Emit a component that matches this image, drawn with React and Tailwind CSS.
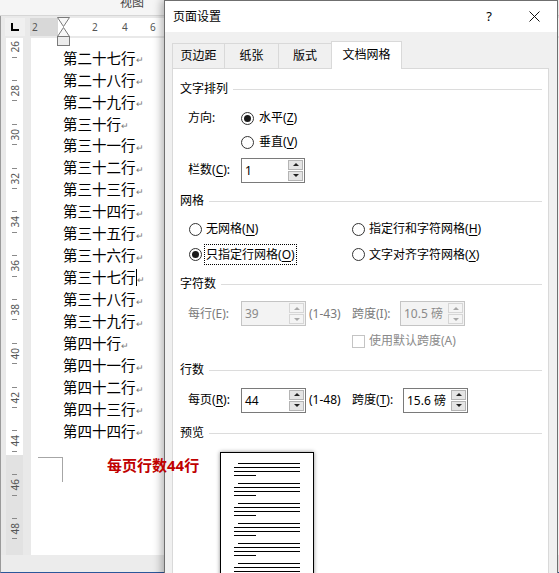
import React from 'react';

const docLines = [
  '第二十七行', '第二十八行', '第二十九行', '第三十行', '第三十一行', '第三十二行',
  '第三十三行', '第三十四行', '第三十五行', '第三十六行', '第三十七行', '第三十八行',
  '第三十九行', '第四十行', '第四十一行', '第四十二行', '第四十三行', '第四十四行',
];

const rulerMarks = [26, 28, 30, 32, 34, 36, 38, 40, 42, 44, 46, 48];

const previewGroups = [0, 1, 2, 3, 4, 5, 6];

function Radio({ checked }) {
  return (
    <span className="flex h-[13px] w-[13px] shrink-0 items-center justify-center rounded-full border border-[#333333] bg-white">
      {checked && <span className="h-[7px] w-[7px] rounded-full bg-[#1a1a1a]" />}
    </span>
  );
}

function Key({ k }) {
  return (
    <>
      (<u className="underline-offset-2">{k}</u>)
    </>
  );
}

function Spin({ value, width, disabled }) {
  const box = disabled
    ? 'border-[#c4c4c4] bg-[#f3f3f3] text-[#8a8a8a]'
    : 'border-[#7a7a7a] bg-white text-black';
  const btn = disabled ? 'border-[#d6d6d6] bg-[#f4f4f4]' : 'border-[#b4b4b4] bg-[#e5e5e5]';
  const arrowUp = disabled ? 'border-b-[#a8a8a8]' : 'border-b-[#222222]';
  const arrowDown = disabled ? 'border-t-[#a8a8a8]' : 'border-t-[#222222]';
  return (
    <div className={`flex h-[25px] border ${width} ${box}`}>
      <span className="flex-1 pl-[3px] leading-[23px]">{value}</span>
      <div className="my-[1px] mr-[1px] flex w-[15px] flex-col gap-[1px]">
        <span className={`flex flex-1 items-center justify-center border ${btn}`}>
          <span className={`h-0 w-0 border-x-[3px] border-b-[3px] border-x-transparent ${arrowUp}`} />
        </span>
        <span className={`flex flex-1 items-center justify-center border ${btn}`}>
          <span className={`h-0 w-0 border-x-[3px] border-t-[3px] border-x-transparent ${arrowDown}`} />
        </span>
      </div>
    </div>
  );
}

function Header({ title, mt }) {
  return (
    <div className={`flex h-[20px] items-center pl-[7px] ${mt}`}>
      <span>{title}</span>
      <span className="ml-[5px] mr-[6px] h-px flex-1 bg-[#dcdcdc]" />
    </div>
  );
}

function PageDialog() {
  return (
    <div className="absolute left-[164px] top-0 h-[600px] w-[394px] border border-[#6f6f6f] bg-[#f0f0f0] text-[12px] text-black shadow-[-3px_0_8px_rgba(0,0,0,0.28)] font-['Noto_Sans','Noto_Sans_CJK_SC',sans-serif]">
      {/* title bar */}
      <div className="flex h-[31px] items-center bg-white pl-[8px]">
        <span>页面设置</span>
        <span className="ml-auto text-[13px]">?</span>
        <svg className="ml-[37px] mr-[17px]" width="11" height="11" viewBox="0 0 11 11">
          <path d="M0.5 0.5L10.5 10.5M10.5 0.5L0.5 10.5" stroke="#111" strokeWidth="1" fill="none" />
        </svg>
      </div>

      {/* tabs */}
      <div className="mt-[9px] flex h-[27px] items-end pl-[7px]">
        <div className="flex h-[25px] w-[52px] items-center justify-center border-l border-t border-[#d9d9d9]">页边距</div>
        <div className="flex h-[25px] w-[54px] items-center justify-center border-l border-t border-[#d9d9d9]">纸张</div>
        <div className="flex h-[25px] w-[53px] items-center justify-center border-l border-t border-[#d9d9d9]">版式</div>
        <div className="relative z-10 -mb-px flex h-[28px] w-[71px] items-start justify-center border-x border-t border-[#d9d9d9] bg-white pt-[4px]">文档网格</div>
      </div>

      {/* panel */}
      <div className="ml-[7px] h-[520px] w-[377px] border border-[#d9d9d9] bg-white">
        <Header title="文字排列" mt="mt-[10px]" />

        <div className="mt-[7px] flex h-[24px] items-center pl-[15px]">
          <span className="w-[53px]">方向:</span>
          <Radio checked />
          <span className="ml-[5px]">水平<Key k="Z" /></span>
        </div>
        <div className="flex h-[24px] items-center pl-[68px]">
          <Radio />
          <span className="ml-[5px]">垂直<Key k="V" /></span>
        </div>
        <div className="mt-[4px] flex h-[24px] items-center pl-[15px]">
          <span className="w-[53px]">栏数<Key k="C" />:</span>
          <Spin value="1" width="w-[64px]" />
        </div>

        <Header title="网格" mt="mt-[9px]" />

        <div className="mt-[8px] flex h-[20px] items-center pl-[16px]">
          <div className="flex w-[163px] items-center gap-[4px]">
            <Radio />
            <span>无网格<Key k="N" /></span>
          </div>
          <div className="flex items-center gap-[4px]">
            <Radio />
            <span>指定行和字符网格<Key k="H" /></span>
          </div>
        </div>
        <div className="mt-[5px] flex h-[21px] items-center pl-[16px]">
          <div className="flex w-[163px] items-center">
            <Radio checked />
            <span className="ml-[2px] border border-dotted border-black px-[1px] leading-[19px]">只指定行网格<Key k="O" /></span>
          </div>
          <div className="flex items-center gap-[4px]">
            <Radio />
            <span>文字对齐字符网格<Key k="X" /></span>
          </div>
        </div>

        <Header title="字符数" mt="mt-[9px]" />

        <div className="mt-[7px] flex h-[25px] items-center pl-[15px] text-[#7a7a7a]">
          <span className="w-[53px]">每行(E):</span>
          <Spin value="39" width="w-[65px]" disabled />
          <span className="ml-[3px] w-[43px]">(1-43)</span>
          <span className="w-[48px]">跨度(I):</span>
          <Spin value="10.5 磅" width="w-[65px]" disabled />
        </div>
        <div className="mt-[5px] flex h-[20px] items-center pl-[179px] text-[#8a8a8a]">
          <span className="h-[13px] w-[13px] border border-[#c4c4c4] bg-white" />
          <span className="ml-[4px]">使用默认跨度(A)</span>
        </div>

        <Header title="行数" mt="mt-[9px]" />

        <div className="mt-[7px] flex h-[26px] items-center pl-[15px]">
          <span className="w-[53px]">每页<Key k="R" />:</span>
          <Spin value="44" width="w-[65px]" />
          <span className="ml-[3px] w-[43px]">(1-48)</span>
          <span className="w-[51px]">跨度<Key k="T" />:</span>
          <Spin value="15.6 磅" width="w-[65px]" />
        </div>

        <Header title="预览" mt="mt-[10px]" />

        <div className="mt-[9px] pl-[47px]">
          <div className="h-[160px] w-[94px] border border-black bg-white pl-[13px] pt-[10px] shadow-[0_0_4px_rgba(0,0,0,0.45)]">
            <div className="flex flex-col gap-[7px]">
              {previewGroups.map((g) => (
                <div key={g} className="flex flex-col gap-[3px]">
                  <span className="ml-[4px] h-px w-[62px] bg-black" />
                  <span className="h-px w-[66px] bg-black" />
                  <span className="h-px w-[66px] bg-black" />
                  <span className="h-px w-[22px] bg-black" />
                </div>
              ))}
            </div>
          </div>
        </div>
      </div>
    </div>
  );
}

function WordWindow() {
  return (
    <div className="flex h-full flex-col font-['Noto_Sans','Noto_Sans_CJK_SC',sans-serif]">
      {/* ribbon bottom */}
      <div className="h-[16px] overflow-hidden border-b border-[#d6d6d6] bg-[#f5f5f5] pl-[120px]">
        <div className="-mt-[3px] text-[12px] leading-[12px] text-[#444444]">视图</div>
      </div>

      {/* horizontal ruler row */}
      <div className="relative flex h-[22px] items-center border-l border-[#9a9a9a] bg-[#e9e9e9]">
        <div className="ml-[4px] flex h-[18px] w-[20px] items-center justify-center bg-[#f0f0f0]">
          <span className="h-[8px] w-[8px] border-b-2 border-l-2 border-black" />
        </div>
        <div className="ml-[5px] flex h-[18px] flex-1 text-[10px] leading-[18px] text-[#555555]">
          <div className="w-[28px] bg-[#d8d8d8] pl-[2px]">2</div>
          <div className="flex flex-1 bg-white">
            <span className="ml-[34px] w-[6px]">2</span>
            <span className="ml-[24px] w-[6px]">4</span>
            <span className="ml-[22px] w-[6px]">6</span>
          </div>
        </div>
        <svg className="absolute left-[56px] top-[1px] z-10" width="13" height="29" viewBox="0 0 13 29">
          <path d="M0.5 0.5H12.5L6.5 9.5Z" fill="#f7f7f7" stroke="#7a7a7a" />
          <path d="M6.5 10.5L0.5 19.5H12.5Z" fill="#f7f7f7" stroke="#7a7a7a" />
          <rect x="0.5" y="19.5" width="12" height="9" fill="#ececec" stroke="#7a7a7a" />
        </svg>
      </div>

      {/* document area */}
      <div className="flex h-[517px]">
        <div className="w-[31px] border-l border-[#9a9a9a] bg-[#e9e9e9] pl-[5px]">
          <div className="h-full w-[17px] overflow-hidden bg-[linear-gradient(to_bottom,#ffffff_417px,#e2e2e2_417px)]">
            <div className="-mt-[13px] flex flex-col">
              {rulerMarks.map((n) => (
                <div key={n} className="flex h-[43.8px] flex-col items-center justify-center gap-[4px]">
                  <span className="h-px w-[5px] bg-[#8a8a8a]" />
                  <span className="rotate-180 text-[10px] leading-[10px] text-[#555555] [writing-mode:vertical-rl]">{n}</span>
                  <span className="h-px w-[5px] bg-[#8a8a8a]" />
                </div>
              ))}
            </div>
          </div>
        </div>

        <div className="flex-1 bg-white pt-[9px] font-['Noto_Sans_CJK_SC',sans-serif]">
          {docLines.map((line, i) => (
            <div key={line} className="flex h-[21.95px] items-center pl-[32px] text-[14.5px] leading-none text-black">
              <span>{line}</span>
              {i === 10 && <span className="h-[17px] w-px bg-black" />}
              <span className="mt-[4px] text-[9px] text-[#777777]">↵</span>
            </div>
          ))}
          <div className="ml-[7px] mt-[15px] h-[25px] w-[25px] border-r border-t border-[#a6a6a6]" />
        </div>
      </div>

      {/* bottom */}
      <div className="flex-1 border-b border-l border-[#9a9a9a] border-b-[#2b579a] bg-[#ececec]" />
    </div>
  );
}

export default function App() {
  return (
    <div className="relative h-[573px] w-[559px] overflow-hidden bg-[#e9e9e9]">
      <WordWindow />
      <PageDialog />
      <div className="absolute left-[107px] top-[456px] z-20 text-[15px] font-bold leading-[18px] text-[#c00000] font-['Noto_Sans','Noto_Sans_CJK_SC',sans-serif]">
        每页行数44行
      </div>
    </div>
  );
}
